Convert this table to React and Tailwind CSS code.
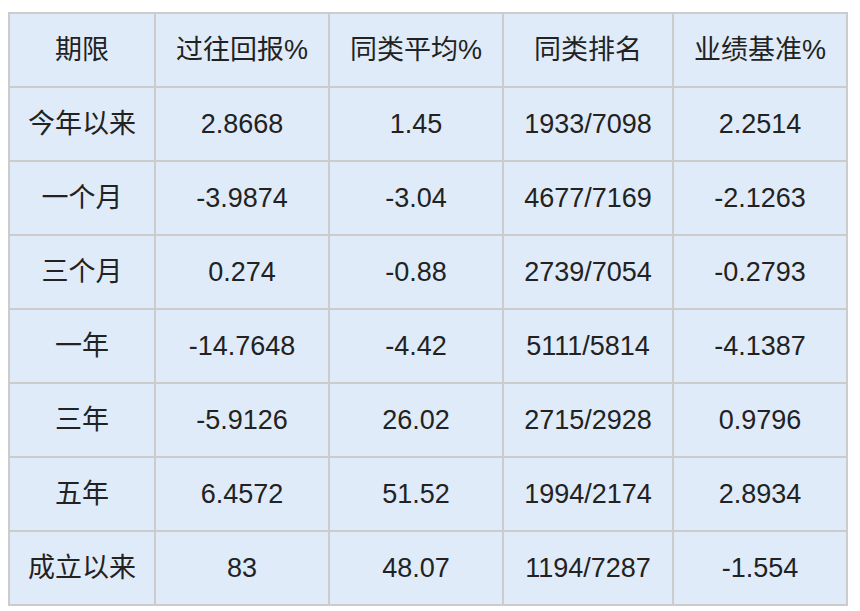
export default function App() {
  const header = ["期限", "过往回报%", "同类平均%", "同类排名", "业绩基准%"];
  const rows = [
    ["今年以来", "2.8668", "1.45", "1933/7098", "2.2514"],
    ["一个月", "-3.9874", "-3.04", "4677/7169", "-2.1263"],
    ["三个月", "0.274", "-0.88", "2739/7054", "-0.2793"],
    ["一年", "-14.7648", "-4.42", "5111/5814", "-4.1387"],
    ["三年", "-5.9126", "26.02", "2715/2928", "0.9796"],
    ["五年", "6.4572", "51.52", "1994/2174", "2.8934"],
    ["成立以来", "83", "48.07", "1194/7287", "-1.554"],
  ];
  const all = [header, ...rows];
  return (
    <div className="w-[860px] h-[611px] bg-white pt-[12px] pl-[8px]">
      <div
        className="w-[840px] grid grid-cols-[144px_172px_172px_168px_172px] auto-rows-[72px] gap-[2px] p-[2px] bg-[#cccccc] text-[27px] text-[#222222]"
        style={{ fontFamily: '"Liberation Sans", "Noto Sans CJK SC", sans-serif' }}
      >
        {all.map((r, i) =>
          r.map((c, j) => (
            <div
              key={i + "-" + j}
              className="bg-[#e0ebf9] flex items-center justify-center leading-none"
            >
              {c}
            </div>
          ))
        )}
      </div>
    </div>
  );
}
